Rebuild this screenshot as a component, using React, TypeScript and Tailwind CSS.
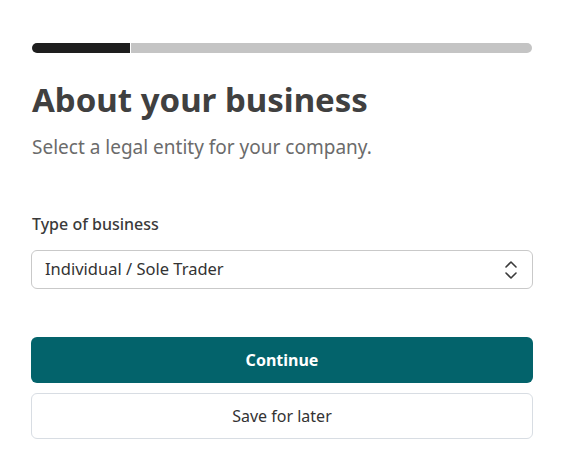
import React from 'react';

const ChevronsUpDown = () => (
  <svg width="14" height="20" viewBox="0 0 14 20" fill="none" stroke="#3a3a3a" strokeWidth="1.6" strokeLinecap="round" strokeLinejoin="round">
    <path d="M2 7 L7 2 L12 7" />
    <path d="M2 13 L7 18 L12 13" />
  </svg>
);

export default function App() {
  return (
    <div className="w-[580px] h-[472px] bg-white pl-8 pt-[43px]" style={{ fontFamily: '"Noto Sans", "Open Sans", sans-serif' }}>
      <div className="w-[500px]">
        {/* Progress */}
        <div className="flex h-[10px]">
          <div className="w-[98px] h-full bg-[#1e1e1e] rounded-l-full" />
          <div className="flex-1 h-full bg-[#c4c4c4] rounded-r-full ml-px" />
        </div>

        {/* Header */}
        <h1 className="mt-[27px] text-[33px] leading-[40px] font-bold text-[#404040]">About your business</h1>
        <p className="mt-[15px] text-[19px] leading-[24px] text-[#6b6b6b]">Select a legal entity for your company.</p>

        {/* Field */}
        <label className="block mt-[54px] text-[16px] leading-[22px] font-medium text-[#3a3a3a]">Type of business</label>
        <div className="mt-[15px] -mx-px h-[39px] border border-[#c9c9c9] rounded-[6px] flex items-center justify-between pl-[13px] pr-[14px]">
          <span className="text-[16.5px] text-[#333333]">Individual / Sole Trader</span>
          <ChevronsUpDown />
        </div>

        {/* Actions */}
        <div className="mt-[48px] -mx-px flex flex-col gap-[10px]">
          <button className="h-[46px] rounded-[6px] bg-[#03636b] text-white text-[16px] font-bold">Continue</button>
          <button className="h-[46px] rounded-[6px] border border-[#d8dde3] bg-white text-[#333333] text-[16px]">Save for later</button>
        </div>
      </div>
    </div>
  );
}
